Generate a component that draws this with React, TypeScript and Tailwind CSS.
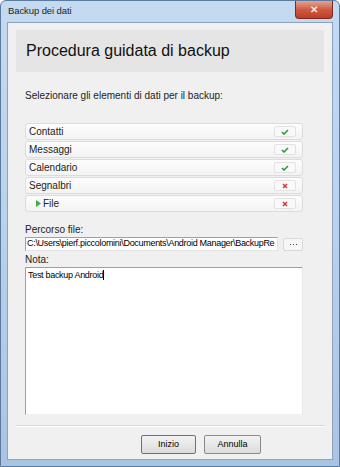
import React from "react";

const items = [
  { label: "Contatti", ok: true },
  { label: "Messaggi", ok: true },
  { label: "Calendario", ok: true },
  { label: "Segnalbri", ok: false },
  { label: "File", ok: false, arrow: true },
];

function Badge({ ok }: { ok: boolean }) {
  return (
    <span className="flex h-[11px] w-[22px] items-center justify-center rounded-[2px] border border-[#e2e2e2] bg-[#f9f9f9]">
      {ok ? (
        <svg width="8" height="6" viewBox="0 0 8 6">
          <path d="M1 3 L3 5 L7 1" stroke="#2e9a3c" strokeWidth="1.6" fill="none" />
        </svg>
      ) : (
        <svg width="6" height="6" viewBox="0 0 6 6">
          <path d="M1 1 L5 5 M5 1 L1 5" stroke="#d9383a" strokeWidth="1.5" fill="none" />
        </svg>
      )}
    </span>
  );
}

export default function App() {
  return (
    <div
      className="flex h-[467px] w-[340px] flex-col overflow-hidden rounded-t-[6px] border border-[#5b7aa0] bg-gradient-to-b from-[#c4daf0] via-[#b9d1ea] to-[#a9c4e2] text-[#000]"
      style={{ fontFamily: '"Liberation Sans", Arial, sans-serif' }}
    >
      {/* title bar */}
      <div className="relative flex h-[21px] shrink-0 items-center pl-[7px] text-[9.5px] tracking-[-0.1px] text-[#1e1e1e]">
        Backup dei dati
        <span className="absolute right-[6px] top-0 flex h-[18px] w-[38px] items-center justify-center rounded-b-[4px] border border-t-0 border-[#7a2a20] bg-gradient-to-b from-[#e4a394] via-[#cc5a44] to-[#c23c22] text-[10px] font-bold text-[#f3e6e3]">
          ✕
        </span>
      </div>

      {/* client area */}
      <div className="mx-[6px] mb-[6px] flex min-h-0 flex-1 flex-col border border-[#8aa3c0] bg-[#f0f0f0]">
        <div className="mx-[8px] mt-[7px] flex h-[42px] shrink-0 items-center bg-[#e5e5e5] pl-[10px] text-[16px] text-[#111]">
          Procedura guidata di backup
        </div>

        <div className="ml-[17px] mt-[17px] text-[10px] leading-[14px] text-[#222]">
          Selezionare gli elementi di dati per il backup:
        </div>

        <div className="ml-[17px] mr-[29px] mt-[20px] flex flex-col gap-[1px]">
          {items.map((it) => (
            <div
              key={it.label}
              className="flex h-[17px] items-center justify-between rounded-[3px] border border-[#dcdcdc] bg-gradient-to-b from-[#fdfdfd] to-[#f3f3f3] pl-[3px] pr-[6px] text-[10px] text-[#222]"
            >
              <span className="flex items-center">
                {it.arrow && (
                  <svg width="7" height="7" viewBox="0 0 7 7" className="ml-[6px] mr-[1px]">
                    <path d="M1 0 L6 3.5 L1 7 Z" fill="#35b23c" />
                  </svg>
                )}
                {it.label}
              </span>
              <Badge ok={it.ok} />
            </div>
          ))}
        </div>

        <div className="ml-[17px] mt-[11px] text-[10px] leading-[14px] text-[#222]">Percorso file:</div>
        <div className="ml-[17px] mr-[29px] flex items-center gap-[5px]">
          <div className="flex h-[14px] flex-1 items-center overflow-hidden whitespace-nowrap border border-[#a0a0a0] border-b-[#e3e3e3] border-r-[#e3e3e3] bg-white pl-[1px] text-[9px] tracking-[-0.3px]">
            C:\Users\pierf.piccolomini\Documents\Android Manager\BackupRe
          </div>
          <div className="flex h-[13px] w-[20px] shrink-0 items-center justify-center gap-[2px] rounded-[2px] border border-[#d8d8d8] bg-[#f6f6f6]">
            <span className="h-[1px] w-[1px] bg-[#444]" />
            <span className="h-[1px] w-[1px] bg-[#444]" />
            <span className="h-[1px] w-[1px] bg-[#444]" />
          </div>
        </div>

        <div className="ml-[17px] mt-[2px] text-[10px] leading-[14px] text-[#222]">Nota:</div>
        <div className="ml-[17px] mr-[29px] h-[148px] shrink-0 border border-[#a0a0a0] border-b-[#f0f0f0] border-r-[#e8e8e8] bg-white pl-[2px] pt-[1px] text-[9px] tracking-[-0.3px]">
          Test backup Android<span className="border-l border-black">&nbsp;</span>
        </div>

        <div className="mx-[8px] mt-[10px] h-[2px] shrink-0 border-b border-t border-b-white border-t-[#d5d5d5]" />

        <div className="ml-[133px] mt-[8px] flex gap-[8px]">
          <button className="h-[19px] w-[55px] rounded-[2px] border border-[#707070] bg-gradient-to-b from-[#f2f2f2] to-[#dcdcdc] text-[9px]">
            Inizio
          </button>
          <button className="h-[19px] w-[57px] rounded-[2px] border border-[#8a8a8a] bg-gradient-to-b from-[#f2f2f2] to-[#dcdcdc] text-[9px]">
            Annulla
          </button>
        </div>
      </div>
    </div>
  );
}
